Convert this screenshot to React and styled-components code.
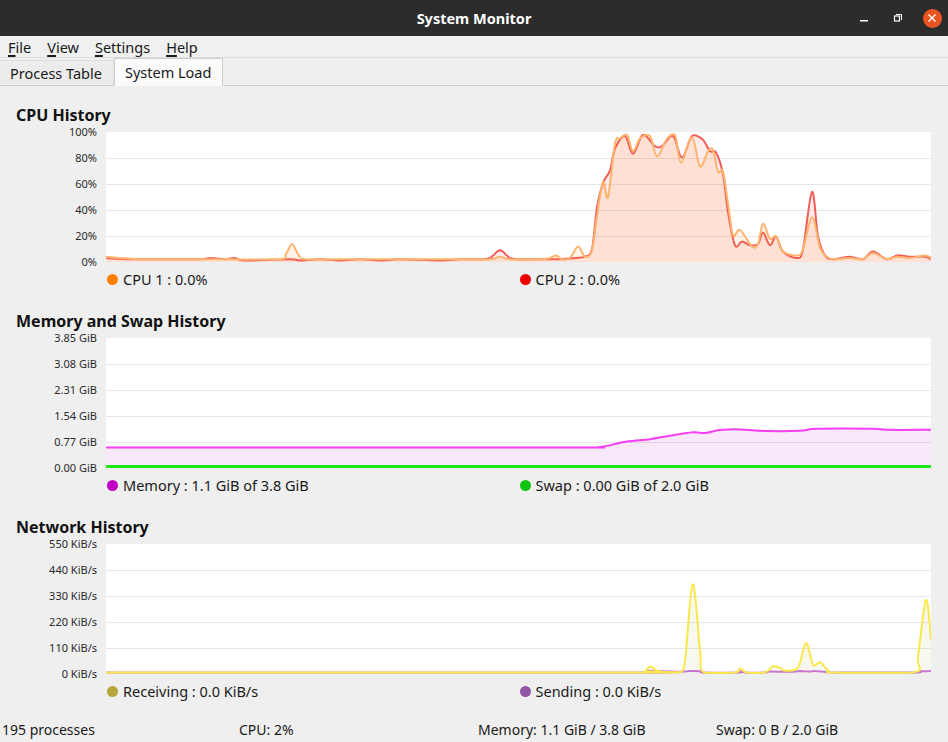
import React from 'react';
import styled, { createGlobalStyle } from 'styled-components';

const GlobalStyle = createGlobalStyle`
  html, body { margin: 0; padding: 0; }
  body {
    background: #efefef;
    font-family: "Noto Sans", "DejaVu Sans", sans-serif;
    color: #2e2e2e;
  }
`;

const CHART_W = 825;
const CHART_H = 130;
const LEFT = 106;

// data points are [absolute x on screen, value]
const cpu2 = [[106,2],[130,1],[160,1],[200,1],[210,2],[225,1],[235,2],[245,0],[290,1],[300,0],[320,1],[340,0],[360,1],[380,0],[400,1],[440,0],[460,1],[480,1],[490,2],[500,8],[510,2],[520,1],[540,1],[560,1],[575,2],[585,3],[592,9],[597,42],[603,61],[610,71],[615,88],[625,98],[633,84],[643,99],[655,90],[662,90],[673,98],[682,81],[692,98],[703,95],[710,86],[716,85],[723,68],[728,38],[735,12],[742,15],[750,12],[758,13],[763,22],[770,12],[776,19],[783,7],[797,2],[803,9],[812,54],[818,19],[825,4],[833,1],[850,3],[863,1],[873,7],[887,1],[897,4],[910,3],[925,3],[931,1]];
const cpu1 = [[106,3],[120,2],[140,1],[180,1],[200,1],[230,1],[280,1],[286,5],[292,13],[298,5],[305,1],[340,1],[400,1],[460,1],[490,1],[500,3],[510,1],[540,1],[550,2],[556,4],[562,1],[570,2],[578,11],[585,3],[592,8],[597,35],[603,62],[608,50],[615,92],[620,96],[627,99],[633,86],[640,96],[650,98],[657,82],[667,96],[675,99],[681,77],[692,97],[700,74],[708,86],[713,87],[718,70],[723,70],[728,45],[733,20],[740,24],[752,11],[758,13],[763,29],[770,17],[776,19],[783,7],[797,4],[803,9],[812,34],[820,10],[827,3],[833,1],[850,2],[863,1],[873,6],[887,1],[897,3],[910,2],[925,4],[931,2]];
const memory = [[106,0.576],[560,0.576],[592,0.576],[603,0.6],[627,0.755],[650,0.827],[670,0.934],[693,1.036],[705,1.015],[720,1.104],[740,1.125],[767,1.074],[800,1.083],[817,1.143],[873,1.143],[887,1.113],[931,1.113]];
const swap = [[106,0],[931,0]];
const receiving = [[106,0],[640,0],[645,5],[650,26],[657,8],[665,0],[680,2],[685,48],[692.7,382],[700,98],[704,0],[735,0],[740,18],[747,0],[765,0],[773,27],[780,20],[785,8],[798,21],[806,128],[813,34],[820,44],[828,10],[835,0],[913,0],[918,70],[926,315],[931,140]];
const sending = [[106,0],[640,0],[648,8],[655,3],[680,3],[690,6],[700,5],[704,0],[738,0],[741,5],[745,0],[765,0],[770,4],[790,3],[800,6],[810,4],[815,7],[825,3],[835,0],[913,0],[920,5],[931,6]];

const toPoints = (data, max) =>
  data.map(([x, v]) => [x - LEFT, 1.5 + (CHART_H - 3) * (1 - v / max)]);

const clampY = (y) => Math.max(1, Math.min(CHART_H - 1, y));

function smoothPath(pts) {
  let d = `M${pts[0][0]},${pts[0][1]}`;
  for (let i = 0; i < pts.length - 1; i++) {
    const p0 = pts[i - 1] || pts[i];
    const p1 = pts[i];
    const p2 = pts[i + 1];
    const p3 = pts[i + 2] || p2;
    const c1x = p1[0] + (p2[0] - p0[0]) / 6;
    const c1y = clampY(p1[1] + (p2[1] - p0[1]) / 6);
    const c2x = p2[0] - (p3[0] - p1[0]) / 6;
    const c2y = clampY(p2[1] - (p3[1] - p1[1]) / 6);
    d += ` C${c1x.toFixed(1)},${c1y.toFixed(1)} ${c2x.toFixed(1)},${c2y.toFixed(1)} ${p2[0]},${p2[1].toFixed(1)}`;
  }
  return d;
}

function Chart({ series, max }) {
  return (
    <svg width={CHART_W} height={CHART_H} viewBox={`0 0 ${CHART_W} ${CHART_H}`} style={{ display: 'block' }}>
      {[1, 2, 3, 4].map((i) => (
        <line key={i} x1="0" x2={CHART_W} y1={i * 26 + 0.5} y2={i * 26 + 0.5} stroke="#e6e6e6" strokeWidth="1" />
      ))}
      {series.map((s, i) => {
        const pts = toPoints(s.data, max);
        const line = smoothPath(pts);
        return (
          <g key={i}>
            {s.fill && (
              <path d={`${line} L${pts[pts.length - 1][0]},${CHART_H} L${pts[0][0]},${CHART_H} Z`} fill={s.fill} />
            )}
            <path d={line} fill="none" stroke={s.stroke} strokeWidth={s.width || 2} strokeLinejoin="round" />
          </g>
        );
      })}
    </svg>
  );
}

const sections = [
  {
    title: 'CPU History',
    max: 100,
    labels: ['100%', '80%', '60%', '40%', '20%', '0%'],
    series: [
      { data: cpu2, stroke: '#f25d5a', fill: 'rgba(239,0,0,0.08)' },
      { data: cpu1, stroke: '#fdb46e', fill: 'rgba(255,127,0,0.09)' },
    ],
    legend: [
      { color: '#ff7f00', text: 'CPU 1 : 0.0%' },
      { color: '#ef0000', text: 'CPU 2 : 0.0%' },
    ],
  },
  {
    title: 'Memory and Swap History',
    max: 3.85,
    labels: ['3.85 GiB', '3.08 GiB', '2.31 GiB', '1.54 GiB', '0.77 GiB', '0.00 GiB'],
    series: [
      { data: memory, stroke: '#f53ef5', fill: 'rgba(192,0,192,0.09)' },
      { data: swap, stroke: '#1ee81e', width: 3 },
    ],
    legend: [
      { color: '#c000c0', text: 'Memory : 1.1 GiB of 3.8 GiB' },
      { color: '#12c412', text: 'Swap : 0.00 GiB of 2.0 GiB' },
    ],
  },
  {
    title: 'Network History',
    max: 550,
    labels: ['550 KiB/s', '440 KiB/s', '330 KiB/s', '220 KiB/s', '110 KiB/s', '0 KiB/s'],
    series: [
      { data: sending, stroke: '#c872dc', fill: 'rgba(146,80,160,0.06)' },
      { data: receiving, stroke: '#f9e84a', fill: 'rgba(181,166,66,0.08)' },
    ],
    legend: [
      { color: '#b8a63a', text: 'Receiving : 0.0 KiB/s' },
      { color: '#9356a6', text: 'Sending : 0.0 KiB/s' },
    ],
  },
];

export default function App() {
  return (
    <Window>
      <GlobalStyle />
      <TitleBar>
        <span />
        <WindowTitle>System Monitor</WindowTitle>
        <Controls>
          <ControlButton>
            <svg width="10" height="10" viewBox="0 0 10 10"><rect x="1" y="7" width="8" height="1.5" fill="#fff" /></svg>
          </ControlButton>
          <ControlButton>
            <svg width="10" height="10" viewBox="0 0 10 10">
              <path d="M3 1.5 H8.5 V7" fill="none" stroke="#fff" strokeWidth="1" />
              <rect x="1.5" y="3" width="5" height="5" fill="none" stroke="#fff" strokeWidth="1.2" />
            </svg>
          </ControlButton>
          <CloseButton>
            <svg width="10" height="10" viewBox="0 0 10 10">
              <path d="M1.5 1.5 L8.5 8.5 M8.5 1.5 L1.5 8.5" stroke="#fff" strokeWidth="1.4" />
            </svg>
          </CloseButton>
        </Controls>
      </TitleBar>

      <MenuBar>
        <MenuItem><u>F</u>ile</MenuItem>
        <MenuItem><u>V</u>iew</MenuItem>
        <MenuItem><u>S</u>ettings</MenuItem>
        <MenuItem><u>H</u>elp</MenuItem>
      </MenuBar>

      <TabBar>
        <Tab>Process Table</Tab>
        <Tab $active>System Load</Tab>
        <TabRest />
      </TabBar>

      <Content>
        {sections.map((s) => (
          <Section key={s.title}>
            <SectionTitle>{s.title}</SectionTitle>
            <ChartRow>
              <Axis>
                {s.labels.map((l) => <AxisLabel key={l}>{l}</AxisLabel>)}
              </Axis>
              <ChartBox>
                <Chart series={s.series} max={s.max} />
              </ChartBox>
            </ChartRow>
            <Legend>
              {s.legend.map((l) => (
                <LegendItem key={l.text}>
                  <Dot $color={l.color} />
                  {l.text}
                </LegendItem>
              ))}
            </Legend>
          </Section>
        ))}
      </Content>

      <StatusBar>
        <StatusItem>195 processes</StatusItem>
        <StatusItem>CPU: 2%</StatusItem>
        <StatusItem>Memory: 1.1 GiB / 3.8 GiB</StatusItem>
        <StatusItem>Swap: 0 B / 2.0 GiB</StatusItem>
      </StatusBar>
    </Window>
  );
}

// styled-components
const Window = styled.div`
  width: 948px;
  height: 742px;
  background: #efefef;
  display: flex;
  flex-direction: column;
  overflow: hidden;
`;

const TitleBar = styled.div`
  height: 36px;
  background: #2c2c2c;
  display: grid;
  grid-template-columns: 1fr auto 1fr;
  align-items: center;
  padding-right: 4px;
`;

const WindowTitle = styled.div`
  color: #ffffff;
  font-weight: 700;
  font-size: 14.5px;
  padding-left: 4px;
`;

const Controls = styled.div`
  justify-self: end;
  display: flex;
  gap: 10px;
  align-items: center;
`;

const ControlButton = styled.div`
  width: 24px;
  height: 24px;
  display: flex;
  align-items: center;
  justify-content: center;
`;

const CloseButton = styled(ControlButton)`
  width: 19px;
  height: 19px;
  margin: 0 2.5px;
  border-radius: 50%;
  background: #e95420;
`;

const MenuBar = styled.div`
  height: 21px;
  display: flex;
  align-items: center;
  background: #f0f0f0;
  border-bottom: 1px solid #dcdcdc;
  font-size: 14.5px;
  color: #1a1a1a;
`;

const MenuItem = styled.div`
  padding: 0 8px;
  line-height: 20px;
  u { text-decoration-thickness: 1.5px; text-underline-offset: 2px; }
`;

const TabBar = styled.div`
  height: 28px;
  display: flex;
  align-items: flex-end;
  background: #efefef;
`;

const Tab = styled.div`
  height: ${(p) => (p.$active ? '28px' : '26px')};
  box-sizing: border-box;
  padding: 0 11px 0 10px;
  display: flex;
  align-items: center;
  font-size: 14.5px;
  color: #1a1a1a;
  background: ${(p) => (p.$active ? '#fbfbfb' : '#ececec')};
  border: 1px solid ${(p) => (p.$active ? '#cdcdcd' : '#dedede')};
  border-bottom: ${(p) => (p.$active ? '1px solid #fbfbfb' : '1px solid #cdcdcd')};
  border-left: ${(p) => (p.$active ? '1px solid #cdcdcd' : 'none')};
`;

const TabRest = styled.div`
  flex: 1;
  border-bottom: 1px solid #cdcdcd;
`;

const Content = styled.div`
  flex: 1;
  padding: 20px 17px 0 16px;
  display: flex;
  flex-direction: column;
  gap: 24px;
`;

const Section = styled.div`
  display: flex;
  flex-direction: column;
  gap: 8px;
`;

const SectionTitle = styled.div`
  font-weight: 700;
  font-size: 16px;
  line-height: 18px;
  color: #111;
`;

const ChartRow = styled.div`
  display: grid;
  grid-template-columns: 82px ${CHART_W}px;
  column-gap: 8px;
`;

const Axis = styled.div`
  height: ${CHART_H + 12}px;
  margin: -6px 0;
  display: flex;
  flex-direction: column;
  justify-content: space-between;
  align-items: flex-end;
  padding-right: 1px;
`;

const AxisLabel = styled.div`
  font-size: 11px;
  line-height: 12px;
  color: #2a2a2a;
`;

const ChartBox = styled.div`
  width: ${CHART_W}px;
  height: ${CHART_H}px;
  background: #ffffff;
`;

const Legend = styled.div`
  display: grid;
  grid-template-columns: 412.5px 412.5px;
  padding-left: 91px;
  height: 18px;
  align-items: center;
`;

const LegendItem = styled.div`
  display: flex;
  align-items: center;
  gap: 5px;
  font-size: 14.5px;
  line-height: 18px;
  color: #1a1a1a;
`;

const Dot = styled.span`
  width: 11px;
  height: 11px;
  border-radius: 50%;
  background: ${(p) => p.$color};
`;

const StatusBar = styled.div`
  height: 20px;
  margin-bottom: 3px;
  display: grid;
  grid-template-columns: 237px 239px 238px 1fr;
  align-items: center;
  padding-left: 2px;
  font-size: 14px;
  color: #1a1a1a;
`;

const StatusItem = styled.div`
  white-space: nowrap;
`;
